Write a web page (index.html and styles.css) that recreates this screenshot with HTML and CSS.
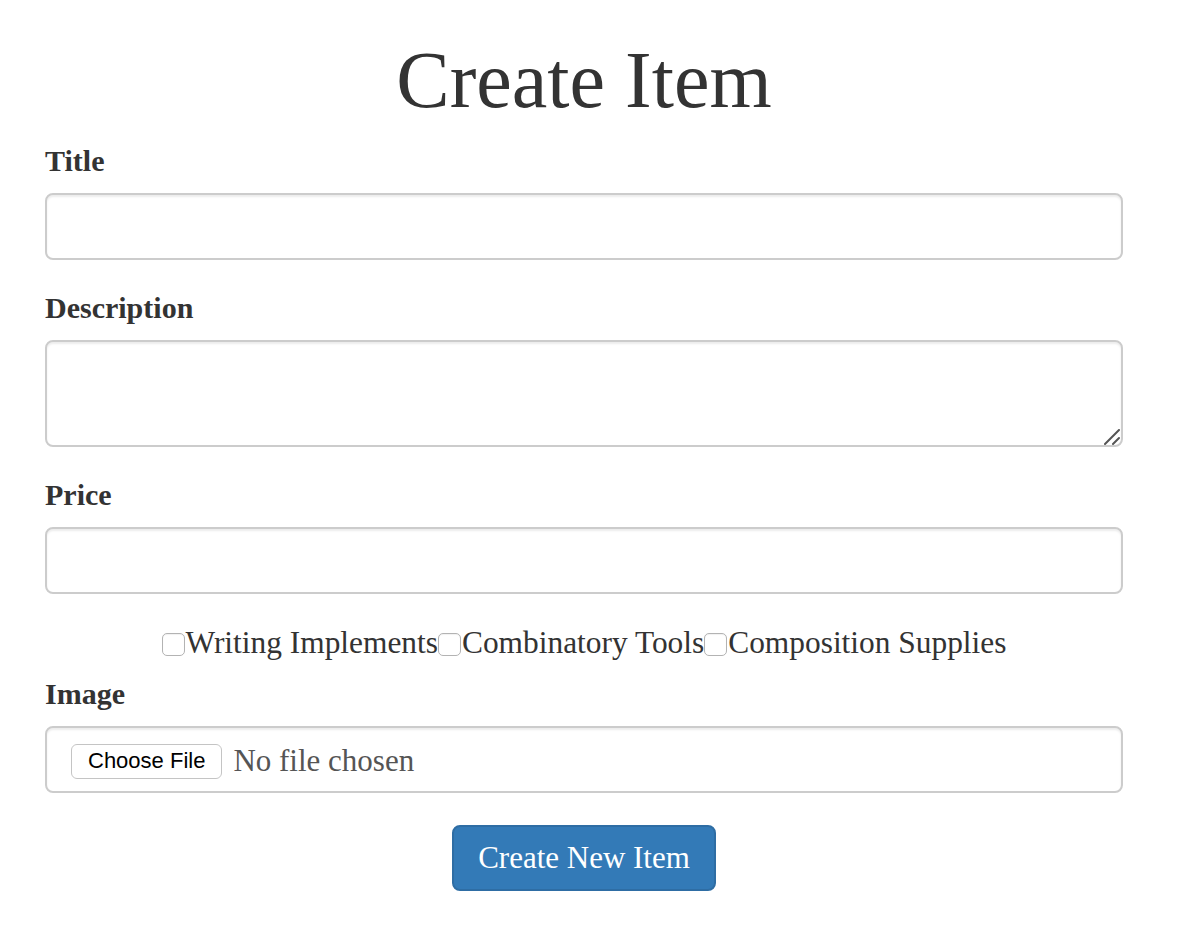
FILE: index.html
```html
<!DOCTYPE html>
<html lang="en">
<head>
  <meta charset="UTF-8">
  <meta name="viewport" content="width=device-width, initial-scale=1.0">
  <title>Create Item</title>
  <link rel="stylesheet" href="styles.css">
</head>
<body>
  <div class="container">
    <h1>Create Item</h1>
    <form action="#" class="item-form">
      <div class="form-group">
        <label for="title">Title</label>
        <input type="text" id="title" name="title" class="form-control">
      </div>
      <div class="form-group">
        <label for="description">Description</label>
        <div class="textarea-wrap">
          <textarea id="description" name="description" class="form-control"></textarea>
          <!-- resize grip, drawn at the size of the original -->
          <svg class="grip" width="16" height="16" viewBox="0 0 16 16">
            <path d="M1 15 L15 1 M9 15 L15 9" stroke="#555" stroke-width="2" stroke-linecap="round"/>
          </svg>
        </div>
      </div>
      <div class="form-group">
        <label for="price">Price</label>
        <input type="text" id="price" name="price" class="form-control">
      </div>
      
      <div class="categories"><label class="cat"><input type="checkbox" name="cat1">Writing Implements</label><label class="cat"><input type="checkbox" name="cat2">Combinatory Tools</label><label class="cat"><input type="checkbox" name="cat3">Composition Supplies</label></div>
      <div class="form-group">
        <label for="image">Image</label>
        <input type="file" id="image" name="image" class="form-control file-control">
      </div>
      <div class="actions">
        <button type="submit" class="btn">Create New Item</button>
      </div>
    </form>
  </div>
</body>
</html>
```

FILE: styles.css
```css
*{
  padding: 0;
  margin: 0;
  box-sizing: border-box;
}
body{
  font-family: "Liberation Serif", "Times New Roman", serif;
  font-size: 31px;
  line-height: 40px;
  color: #333;
  background-color: #fff;
}
.container{
  width: 1078px;
  margin-left: 45px;
}
h1{
  margin: 36px 0 17px;
  font-size: 80px;
  font-weight: 400;
  line-height: 88px;
  text-align: center;
}
.form-group{
  margin-bottom: 28px;
}
.form-group label{
  display: block;
  margin-bottom: 12px;
  font-size: 30px;
  font-weight: 700;
  line-height: 40px;
}
.form-control{
  display: block;
  width: 100%;
  height: 67px;
  padding: 12px 24px;
  border: 2px solid #ccc;
  border-radius: 8px;
  box-shadow: inset 0 2px 2px rgba(0, 0, 0, .075);
  font-family: inherit;
  font-size: 31px;
  line-height: 40px;
  color: #555;
  background-color: #fff;
  outline: none;
}
.textarea-wrap{
  position: relative;
}
textarea.form-control{
  height: 107px;
  resize: none;
}
.grip{
  position: absolute;
  right: 3px;
  bottom: 2px;
}
.file-control{
  padding: 13px 24px 0;
}
.file-control::file-selector-button{
  margin-right: 11px;
  padding: 3px 16px 4px;
  border: 1px solid #c4c4c4;
  border-radius: 6px;
  background-color: #fff;
  font-family: "Liberation Sans", Arial, sans-serif;
  font-size: 22px;
  line-height: 26px;
  color: #000;
  vertical-align: 3px;
}
.categories{
  margin-bottom: 11px;
  padding-top: 1px;
  text-align: center;
  line-height: 40px;
}
.cat{
  font-size: 31.4px;
}
.cat input{
  -webkit-appearance: none;
  appearance: none;
  display: inline-block;
  width: 23px;
  height: 23px;
  margin: 0 1px 0 0;
  border: 1px solid #b3b3b3;
  border-radius: 5px;
  background-color: #fff;
  box-shadow: inset 0 1px 1px rgba(0, 0, 0, .06);
  vertical-align: -3px;
}
.actions{
  padding-top: 4px;
  text-align: center;
}
.btn{
  display: inline-block;
  padding: 11px 24px;
  border: 2px solid #2e6da4;
  border-radius: 8px;
  background-color: #337ab7;
  font-family: inherit;
  font-size: 31px;
  line-height: 40px;
  color: #fff;
  cursor: pointer;
}
```
